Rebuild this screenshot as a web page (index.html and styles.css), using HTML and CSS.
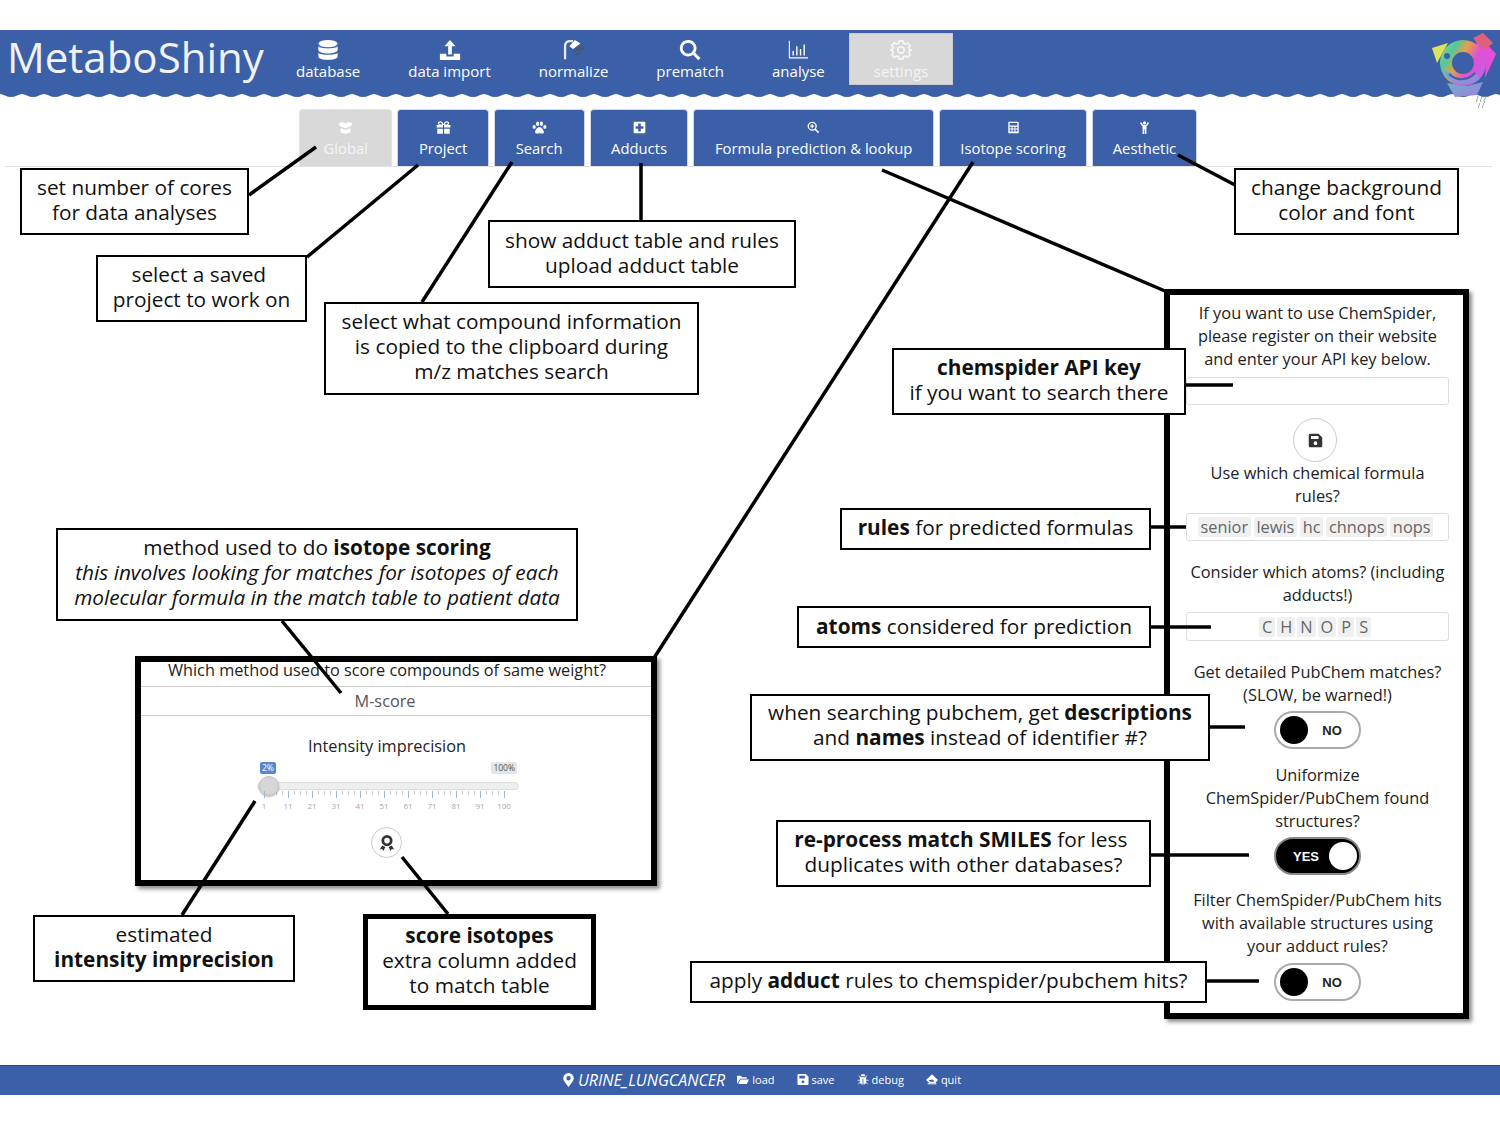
FILE: index.html
```html
<!DOCTYPE html>
<html lang="en">
<head>
    <meta charset="UTF-8">
    <title>MetaboShiny settings</title>
    <link rel="stylesheet" href="styles.css">
</head>
<body>
<div class="page">
    <!-- top bar -->
    <header class="topbar">
        <div class="brand">MetaboShiny</div>
        <nav class="nav">
            <a class="nav-item">
                <svg class="nav-icon" viewBox="0 0 24 24"><ellipse cx="12" cy="5" rx="10.500" ry="4"/><path d="M1.500 8c2 3 19 3 21 0v4c0 5-21 5-21 0z"/><path d="M1.500 15c2 3 19 3 21 0v4c0 5-21 5-21 0z"/></svg>
                database
            </a>
            <a class="nav-item">
                <svg class="nav-icon" viewBox="0 0 24 24"><path d="M12 1l6 7h-4v9h-4V8H6z"/><path d="M1 16h7v3h8v-3h7v7H1z"/></svg>
                data import
            </a>
            <a class="nav-item">
                <svg class="nav-icon" viewBox="0 0 24 24"><path d="M1 22V8C1 3 4 1 8 1h3v2.500H8C5 3.500 3.500 5 3.500 8v14z" fill="#e8e8e8"/><path d="M7 8l6-7 6 4-8 6z"/><path d="M14 10l2 1M17 8l2 1M20 7l2 1M12 13l2 1M15 12l2 1M18 11l2 1M21 10l2 1M14 16l2 1M17 15l2 1" stroke="#49525f" stroke-width="1.600"/></svg>
                normalize
            </a>
            <a class="nav-item">
                <svg class="nav-icon" viewBox="0 0 24 24"><path d="M10 1a9 9 0 1 0 5.200 16.300l5.800 5.800 2.400-2.400-5.800-5.800A9 9 0 0 0 10 1zm0 3a6 6 0 1 1 0 12 6 6 0 0 1 0-12z"/></svg>
                prematch
            </a>
            <a class="nav-item">
                <svg class="nav-icon" viewBox="0 0 24 24"><path d="M2 2h1.200v18H23v1.200H2z"/><path d="M6 13h1.500v5H6zM10 8h1.500v10H10zM14 11h1.500v7H14zM18 6h1.500v12H18z"/></svg>
                analyse
            </a>
            <a class="nav-item nav-item-active">
                <svg class="nav-icon nav-icon-cog" viewBox="0 0 24 24"><path d="M10 2h4l.6 2.800 2.200.9 2.400-1.500 2.800 2.800-1.500 2.400.9 2.200L24 12v0l-2.600.6-.9 2.200 1.500 2.400-2.800 2.800-2.400-1.500-2.200.9L14 22h-4l-.6-2.600-2.200-.9-2.400 1.500L2 17.200l1.500-2.400-.9-2.200L0 12v0l2.600-.6.9-2.200L2 6.800 4.800 4l2.400 1.500 2.200-.9z"/><circle cx="12" cy="12" r="3.500"/></svg>
                settings
            </a>
        </nav>
    </header>
    <svg class="wave" width="1500" height="4">
        <defs>
            <pattern id="scallop" width="22" height="4" patternUnits="userSpaceOnUse">
                <path d="M0 0H22V1Q20 1 17 2.500 14 4 11 4 8 4 5 2.500 2 1 0 1z"/>
            </pattern>
        </defs>
        <rect width="1500" height="4" fill="url(#scallop)"/>
    </svg>

    <svg class="logo" viewBox="0 0 70 70">
        <defs>
            <linearGradient id="rainbow" x1="0" y1="0.1" x2="1" y2="0.7">
                <stop offset="0" stop-color="#a8d860"/>
                <stop offset=".25" stop-color="#4fc8a0"/>
                <stop offset=".45" stop-color="#e8a040"/>
                <stop offset=".7" stop-color="#e050d8"/>
                <stop offset="1" stop-color="#c060e0"/>
            </linearGradient>
            <linearGradient id="rainbow-low" x1="0" y1="0" x2="1" y2="1">
                <stop offset="0" stop-color="#70b0c8"/>
                <stop offset="1" stop-color="#9a80e0"/>
            </linearGradient>
        </defs>
        <path d="M2 18l16-5-11 20z" fill="#dbe45c"/>
        <path d="M45 9l10 3 11 12-11 24 1-18-13-3 5-8z" fill="#e24fd8"/>
        <path d="M43 8l10-5 10 10-8 7z" fill="#e0607a"/>
        <path d="M17 53l20 3 16-4-6 13-22 2z" fill="url(#rainbow-low)"/>
        <path fill-rule="evenodd" d="M33 10a23 23 0 1 0 .1 46 23 23 0 0 0-.1-46zm0 12a11 11 0 1 1-.1 22 11 11 0 0 1 .1-22z" fill="url(#rainbow)"/>
        <path d="M12 40a23 23 0 0 0 38 8l-6-5a12 12 0 0 1-22 0z" fill="url(#rainbow-low)"/>
        <circle cx="17" cy="26" r="3" fill="#3c60a8"/>
        <path d="M19 44c8 8 20 6 26-1" fill="none" stroke="#3c60a8" stroke-width="2"/>
    </svg>
    <svg class="squiggle" viewBox="0 0 12 14"><path d="M2 1c3 2-2 3 0 6M6 1c3 2-2 3 0 6M10 1c2 3-3 4 0 7M4 8c2 2-2 3 0 5M8 8c2 2-2 3 0 5"/></svg>

    <!-- settings tabs -->
    <div class="tabs">
        <a class="tab tab-off">
            <svg class="tab-icon" viewBox="0 0 24 20"><path d="M1 3l6-2 5 3 5-3 6 2-2 5-9 3-9-3z"/><path d="M4 11l8 3 8-3v7l-8 2-8-2z"/></svg>
            Global
        </a>
        <a class="tab">
            <svg class="tab-icon" viewBox="0 0 24 20"><path d="M7 0c3 0 4 3 5 5 1-2 2-5 5-5s4 2 4 3-1 2-2 3h4v4H13V6h-2v4H1V6h4C4 5 3 4 3 3s1-3 4-3zm0 2c-1 0-2 .5-2 1.500S6 5 7.500 5H10C9 3 8 2 7 2zm10 0c-1 0-2 1-3 3h2.500C18 5 19 4.500 19 3.500S18 2 17 2z"/><path d="M2 12h9v8H2zM13 12h9v8h-9z"/></svg>
            Project
        </a>
        <a class="tab tab-search">
            <svg class="tab-icon" viewBox="0 0 24 20"><ellipse cx="9" cy="4" rx="2.500" ry="3.500"/><ellipse cx="15" cy="4" rx="2.500" ry="3.500"/><ellipse cx="3.500" cy="9" rx="2.500" ry="3"/><ellipse cx="20.500" cy="9" rx="2.500" ry="3"/><path d="M12 9c3 0 7 5 7 8s-3 3-7 2c-4 1-7 1-7-2s4-8 7-8z"/></svg>
            Search
        </a>
        <a class="tab">
            <svg class="tab-icon" viewBox="0 0 20 20"><path fill-rule="evenodd" d="M3 1h14a2 2 0 0 1 2 2v14a2 2 0 0 1-2 2H3a2 2 0 0 1-2-2V3a2 2 0 0 1 2-2zm5 3v4H4v4h4v4h4v-4h4V8h-4V4z"/></svg>
            Adducts
        </a>
        <a class="tab">
            <svg class="tab-icon" viewBox="0 0 20 20"><path fill-rule="evenodd" d="M8 1a7 7 0 1 0 4 12.700l5 5 1.700-1.700-5-5A7 7 0 0 0 8 1zm0 2a5 5 0 1 1 0 10A5 5 0 0 1 8 3zM7 5v2H5v2h2v2h2V9h2V7H9V5z"/></svg>
            Formula prediction &amp; lookup
        </a>
        <a class="tab">
            <svg class="tab-icon" viewBox="0 0 20 20"><path fill-rule="evenodd" d="M3 1h14a1 1 0 0 1 1 1v16a1 1 0 0 1-1 1H3a1 1 0 0 1-1-1V2a1 1 0 0 1 1-1zm1 2v4h12V3zm0 6v2.500h3V9zm4.500 0v2.500h3V9zM13 9v2.500h3V9zm-9 4v3h3v-3zm4.500 0v3h3v-3zm4.500 0v3h3v-3z"/></svg>
            Isotope scoring
        </a>
        <a class="tab tab-aesthetic">
            <svg class="tab-icon" viewBox="0 0 20 20"><circle cx="10" cy="3" r="2.500"/><path d="M3 3l2-1 3 4h4l3-4 2 1-4 6v11h-2.500v-7h-1v7H7V9z"/></svg>
            Aesthetic
        </a>
    </div>

    <!-- isotope panel -->
    <section class="panel panel-isotope">
        <div class="select-label">Which method used to score compounds of same weight?</div>
        <div class="select-value">M-score</div>
        <div class="slider-title">Intensity imprecision</div>
        <div class="slider">
            <div class="slider-tags">
                <span class="tag tag-from">2%</span>
                <span class="tag">100%</span>
            </div>
            <div class="slider-track">
                <span class="slider-thumb"></span>
            </div>
            <div class="slider-scale">
                <span>1</span><span>11</span><span>21</span><span>31</span><span>41</span><span>51</span><span>61</span><span>71</span><span>81</span><span>91</span><span>100</span>
            </div>
        </div>
        <button class="round-btn round-btn-small">
            <svg viewBox="0 0 20 22" width="16" height="18"><path fill-rule="evenodd" d="M10 1a7 7 0 1 0 0 14 7 7 0 0 0 0-14zm0 3.500a3.500 3.500 0 1 1 0 7 3.500 3.500 0 0 1 0-7z"/><path d="M4 14l-3 5 3-.5L5.500 21 8 16zM16 14l3 5-3-.5-1.500 2.500L12 16z"/></svg>
        </button>
    </section>

    <!-- formula panel -->
    <section class="panel panel-formula">
        <p class="field-text">If you want to use ChemSpider,<br>please register on their website<br>and enter your API key below.</p>
        <div class="box box-key"></div>
        <button class="round-btn">
            <svg viewBox="0 0 20 20" width="15" height="15"><path fill-rule="evenodd" d="M3 1h11l5 5v11a2 2 0 0 1-2 2H3a2 2 0 0 1-2-2V3a2 2 0 0 1 2-2zm1 3v4h10V4zm6 7a2.500 2.500 0 1 0 0 5 2.500 2.500 0 0 0 0-5z"/></svg>
        </button>
        <p class="field-text">Use which chemical formula<br>rules?</p>
        <div class="box box-chips">
            <span class="chip">senior</span><span class="chip">lewis</span><span class="chip">hc</span><span class="chip">chnops</span><span class="chip">nops</span>
        </div>
        <p class="field-text field-gap">Consider which atoms? (including<br>adducts!)</p>
        <div class="box box-chips box-atoms">
            <span class="chip">C</span><span class="chip">H</span><span class="chip">N</span><span class="chip">O</span><span class="chip">P</span><span class="chip">S</span>
        </div>
        <p class="field-text field-gap">Get detailed PubChem matches?<br>(SLOW, be warned!)</p>
        <div class="switch"><span class="knob"></span><span class="switch-text">NO</span></div>
        <p class="field-text field-gap-wide">Uniformize<br>ChemSpider/PubChem found<br>structures?</p>
        <div class="switch switch-on"><span class="switch-text">YES</span><span class="knob"></span></div>
        <p class="field-text field-gap-small">Filter ChemSpider/PubChem hits<br>with available structures using<br>your adduct rules?</p>
        <div class="switch switch-last"><span class="knob"></span><span class="switch-text">NO</span></div>
    </section>

    <!-- leader lines of the annotations -->
    <svg class="leaders" width="1500" height="1125">
        <path d="M316 147L249 195"/>
        <path d="M418 165L307 257"/>
        <path d="M512 162L422 302"/>
        <path d="M641 163V220"/>
        <path d="M882 170L1165 291"/>
        <path d="M973 162L654 658"/>
        <path d="M1178 155L1235 185"/>
        <path d="M282 621L341 693"/>
        <path d="M255 801L182 915"/>
        <path d="M402 857L448 914"/>
        <path d="M1186 385H1233"/>
        <path d="M1151 527H1186"/>
        <path d="M1151 627H1211"/>
        <path d="M1210 727H1245"/>
        <path d="M1151 855H1249"/>
        <path d="M1207 981H1259"/>
    </svg>

    <!-- annotations -->
    <div class="note note-cores"><span>set number of cores<br>for data analyses</span></div>
    <div class="note note-project"><span>select a saved&nbsp;<br>project to work on</span></div>
    <div class="note note-search"><span>select what compound information<br>is copied to the clipboard during<br>m/z matches search</span></div>
    <div class="note note-adducts"><span>show adduct table and rules<br>upload adduct table</span></div>
    <div class="note note-aesthetic"><span>change background<br>color and font</span></div>
    <div class="note note-key"><span><b>chemspider API key</b><br>if you want to search there</span></div>
    <div class="note note-rules"><span><b>rules</b> for predicted formulas</span></div>
    <div class="note note-atoms"><span><b>atoms</b> considered for prediction</span></div>
    <div class="note note-names"><span>when searching pubchem, get <b>descriptions</b><br>and <b>names</b> instead of identifier #?</span></div>
    <div class="note note-smiles"><span><b>re-process match SMILES</b> for less&nbsp;<br>duplicates with other databases?</span></div>
    <div class="note note-apply"><span>apply <b>adduct</b> rules to chemspider/pubchem hits?</span></div>
    <div class="note note-method"><span>method used to do <b>isotope scoring</b><br><i>this involves looking for matches for isotopes of each<br>molecular formula in the match table to patient data</i></span></div>
    <div class="note note-intensity"><span>estimated<br><b>intensity imprecision</b></span></div>
    <div class="note note-score"><span><b>score isotopes</b><br>extra column added<br>to match table</span></div>

    <!-- bottom bar -->
    <footer class="footer">
        <svg class="foot-pin" viewBox="0 0 12 16"><path fill-rule="evenodd" d="M6 0a6 6 0 0 0-6 6c0 3 3 6 6 10 3-4 6-7 6-10a6 6 0 0 0-6-6zm0 3.500a2.500 2.500 0 1 1 0 5 2.500 2.500 0 0 1 0-5z"/></svg>
        <span class="foot-project">URINE_LUNGCANCER</span>
        <a class="foot-link"><svg viewBox="0 0 16 12"><path d="M0 1h5l2 2h6v2H4L1 11H0zM4.500 6H16l-3 6H2z"/></svg>load</a>
        <a class="foot-link"><svg viewBox="0 0 12 12"><path fill-rule="evenodd" d="M1 0h8l3 3v8a1 1 0 0 1-1 1H1a1 1 0 0 1-1-1V1a1 1 0 0 1 1-1zm1 2v3h6V2zm4 5a1.500 1.500 0 1 0 0 3 1.500 1.500 0 0 0 0-3z"/></svg>save</a>
        <a class="foot-link"><svg viewBox="0 0 14 14"><path d="M4 3a3 3 0 0 1 6 0zM3 4h8v5a4 4 0 0 1-3.500 4.500V6h-1v7.500A4 4 0 0 1 3 9z"/><path d="M2 2l2 3M12 2l-2 3M0 8h3M11 8h3M1 13l2.500-3M13 13l-2.500-3" stroke="#fff" fill="none"/></svg>debug</a>
        <a class="foot-link"><svg viewBox="0 0 14 12"><path fill-rule="evenodd" d="M7 0l7 6.500-3 3.500H4L0 6.500zM3 7l2 1.500h5L8 6z"/><path d="M2 11h10" stroke="#fff" stroke-width="1.200"/></svg>quit</a>
    </footer>
</div>
</body>
</html>
```

FILE: styles.css
```css
body {
    margin: 0;
    background: #fff;
    font-family: "Open Sans", sans-serif;
    color: #222;
}

.page {
    position: relative;
    width: 1500px;
    height: 1125px;
    overflow: hidden;
}

/* top bar */
.topbar {
    display: flex;
    margin-top: 30px;
    height: 63px;
    padding-left: 7px;
    background: #3c60a8;
    color: #fff;
}

.brand {
    width: 265px;
    font-size: 42px;
    font-weight: 400;
    line-height: 53px;
    color: #f2f2f2;
}

.nav {
    display: flex;
    align-items: flex-start;
    padding-top: 3px;
}

.nav-item {
    display: flex;
    flex-direction: column;
    align-items: center;
    box-sizing: border-box;
    height: 52px;
    padding: 6px 24px 0;
    font-size: 15px;
    line-height: 20px;
    white-space: nowrap;
}

.nav-icon {
    width: 22px;
    height: 22px;
    fill: #fff;
}

.nav-icon-cog {
    fill: none;
    stroke: #f4f4f4;
    stroke-width: 2;
}

.nav-item-active {
    background: #d8d8d8;
    border: 1px solid #c8c8d0;
    padding-top: 5px;
    color: #f4f4f4;
}

.wave {
    display: block;
}

#scallop path {
    fill: #3c60a8;
}

.logo {
    position: absolute;
    left: 1430px;
    top: 30px;
    width: 70px;
    height: 70px;
}

.squiggle {
    position: absolute;
    left: 1475px;
    top: 95px;
    width: 12px;
    height: 14px;
    fill: none;
    stroke: #999;
    stroke-width: 1;
}

/* tabs */
.tabs {
    display: flex;
    gap: 5px;
    margin: 12px 8px 0 5px;
    padding-left: 294px;
    height: 57px;
    border-bottom: 1px solid #e2e2e2;
}

.tab {
    display: flex;
    flex-direction: column;
    align-items: center;
    padding: 11px 20.5px 0;
    background: #3c60a8;
    border: 1px solid #cfd6e8;
    border-bottom: 0;
    border-radius: 4px 4px 0 0;
    color: #fff;
    font-size: 14.8px;
    line-height: 20px;
    white-space: nowrap;
}

.tab-search {
    padding-left: 21px;
    padding-right: 21px;
}

.tab-aesthetic {
    padding-left: 19.5px;
    padding-right: 19.5px;
}

.tab-icon {
    width: 15px;
    height: 13px;
    margin-bottom: 4px;
    fill: #fff;
}

.tab-off {
    padding-left: 23.5px;
    padding-right: 23.5px;
    background: #d9d9d9;
    border-color: #e4e4e4;
    color: #f5f5f5;
}

/* panels with a heavy frame */
.panel {
    position: absolute;
    box-sizing: border-box;
    background: #fff;
    border: 6px solid #000;
    box-shadow: 3px 3px 4px rgba(0, 0, 0, 0.45);
    color: #222;
    text-align: center;
}

.panel-isotope {
    left: 135px;
    top: 656px;
    width: 522px;
    height: 230px;
    font-size: 16.3px;
}

.select-label {
    height: 24px;
    padding-right: 18px;
    line-height: 17px;
    border-bottom: 1px solid #ccc;
    white-space: nowrap;
}

.select-value {
    height: 28px;
    padding-right: 22px;
    line-height: 29px;
    color: #555;
    border-bottom: 1px solid #ccc;
}

.slider-title {
    margin-top: 18px;
    padding-right: 18px;
    line-height: 24px;
}

.slider {
    width: 262px;
    margin: 4px 0 0 116px;
}

.slider-tags {
    display: flex;
    justify-content: space-between;
    padding: 0 2px 0 3px;
}

.tag {
    padding: 0 2px;
    background: #e6e6e6;
    border-radius: 2px;
    font-size: 8.5px;
    line-height: 12px;
    color: #555;
}

.tag-from {
    background: #5a86d0;
    color: #fff;
}

.slider-track {
    position: relative;
    height: 6px;
    margin-top: 8px;
    background: #eee;
    border: 1px solid #ddd;
    border-radius: 4px;
}

.slider-thumb {
    position: absolute;
    left: 1px;
    top: -7px;
    box-sizing: border-box;
    width: 20px;
    height: 20px;
    background: #d6d6d6;
    border: 1px solid #c4c4c4;
    border-radius: 50%;
    box-shadow: 0 1px 2px rgba(0, 0, 0, 0.3);
}

.slider-scale {
    display: flex;
    justify-content: space-between;
    height: 16px;
    margin: 1px 15px 0 7px;
    padding-top: 6px;
    background: repeating-linear-gradient(to right, #ccc 0, #ccc 1px, transparent 1px, transparent 6px) no-repeat 0 0 / 100% 4px;
}

.slider-scale span {
    position: relative;
    width: 0;
    display: flex;
    justify-content: center;
    margin-top: 4px;
    font-size: 8px;
    line-height: 10px;
    color: #a8a8a8;
}

.slider-scale span::before {
    content: "";
    position: absolute;
    top: -10px;
    width: 1px;
    height: 7px;
    background: #9db8e0;
}

.round-btn {
    display: flex;
    align-items: center;
    justify-content: center;
    box-sizing: border-box;
    width: 44px;
    height: 44px;
    margin: 13px auto 0 107px;
    padding: 0;
    background: #fff;
    border: 1px solid #ccc;
    border-radius: 50%;
}

.round-btn svg {
    fill: #333;
}

.round-btn-small {
    width: 31px;
    height: 31px;
    margin: 14px 0 0 230px;
}

.panel-formula {
    left: 1164px;
    top: 289px;
    width: 305px;
    height: 730px;
    padding: 7px 14px 0 16px;
    font-size: 16.35px;
    line-height: 23px;
}

.field-text {
    margin: 0;
    white-space: nowrap;
}

.field-gap {
    margin-top: 20px;
}

.field-gap-wide {
    margin-top: 15px;
}

.field-gap-small {
    margin-top: 14px;
}

.box {
    box-sizing: border-box;
    height: 28px;
    margin-top: 5px;
    background: #fff;
    border: 1px solid #ddd;
    border-radius: 3px;
}

.box-key {
    margin-top: 6px;
}

.box-chips {
    display: flex;
    align-items: center;
    justify-content: center;
    gap: 3px;
    padding-right: 4px;
    color: #666;
    line-height: 20px;
}

.box-atoms {
    height: 29px;
    gap: 2px;
    padding-right: 5px;
}

.chip {
    padding: 0 2.7px;
    background: #f0f0f0;
    border-radius: 2px;
}

.box-atoms .chip {
    padding: 0 3px;
}

.switch {
    display: flex;
    align-items: center;
    justify-content: space-between;
    box-sizing: border-box;
    width: 87px;
    height: 38px;
    margin: 4px 0 0 88px;
    padding: 0 7px 0 4px;
    background: #fff;
    border: 2px solid #aaa;
    border-radius: 20px;
}

.switch-last {
    margin-top: 5px;
}

.knob {
    width: 28px;
    height: 28px;
    background: #000;
    border-radius: 50%;
}

.switch-text {
    width: 40px;
    font-family: "Liberation Sans", Arial, sans-serif;
    font-size: 13px;
    font-weight: bold;
    color: #222;
}

.switch-on {
    padding: 0 2px 0 17px;
    background: #000;
    border-color: #888;
}

.switch-on .switch-text {
    color: #fff;
    width: auto;
}

.switch-on .knob {
    background: #fff;
}

/* annotations */
.leaders {
    position: absolute;
    left: 0;
    top: 0;
    pointer-events: none;
}

.leaders path {
    fill: none;
    stroke: #000;
    stroke-width: 3.5;
}

.note {
    position: absolute;
    display: flex;
    align-items: center;
    justify-content: center;
    box-sizing: border-box;
    padding-bottom: 3px;
    background: #fff;
    border: 2px solid #000;
    font-size: 20.8px;
    line-height: 25px;
    color: #111;
    text-align: center;
    white-space: nowrap;
}

.note-cores { left: 20px; top: 168px; width: 229px; height: 67px; }
.note-project { left: 96px; top: 255px; width: 211px; height: 67px; }
.note-search { left: 324px; top: 302px; width: 375px; height: 93px; padding-bottom: 5px; }
.note-adducts { left: 488px; top: 220px; width: 308px; height: 68px; }
.note-aesthetic { left: 1234px; top: 168px; width: 225px; height: 67px; }
.note-key { left: 892px; top: 348px; width: 294px; height: 67px; }
.note-rules { left: 840px; top: 508px; width: 311px; height: 42px; }
.note-atoms { left: 797px; top: 606px; width: 354px; height: 42px; padding-bottom: 1px; }
.note-names { left: 750px; top: 694px; width: 460px; height: 67px; padding-bottom: 5px; }
.note-smiles { left: 776px; top: 820px; width: 375px; height: 67px; }
.note-apply { left: 690px; top: 961px; width: 517px; height: 42px; }
.note-method { left: 56px; top: 528px; width: 522px; height: 93px; padding-bottom: 5px; }
.note-intensity { left: 33px; top: 915px; width: 262px; height: 67px; }
.note-score { left: 363px; top: 914px; width: 233px; height: 96px; border-width: 5px; }

/* bottom bar */
.footer {
    position: absolute;
    left: 0;
    right: 0;
    top: 1065px;
    display: flex;
    align-items: center;
    box-sizing: border-box;
    height: 30px;
    padding: 0 0 2px 563px;
    background: #3c60a8;
    border-top: 1px solid #444;
    color: #fff;
    font-size: 11px;
}

.foot-pin {
    width: 11px;
    height: 14px;
    fill: #fff;
}

.foot-project {
    margin: 0 12px 0 4px;
    font-size: 16px;
    font-style: italic;
}

.foot-link {
    display: flex;
    align-items: center;
    gap: 3px;
    margin-right: 22px;
}

.foot-link svg {
    width: 12px;
    height: 11px;
    fill: #fff;
}
```
